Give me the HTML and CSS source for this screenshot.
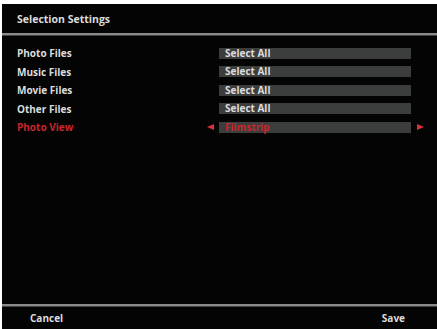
FILE: index.html
```html
<!DOCTYPE html>
<html>
<head>
<meta charset="utf-8">
<link rel="stylesheet" href="styles.css">
</head>
<body>
<div class="screen">
  <div class="header">Selection Settings</div>
  <div class="rule"></div>
  <div class="list">
    <div class="row"><span class="label">Photo Files</span><span class="arrow"></span><span class="value">Select All</span><span class="arrow"></span></div>
    <div class="row"><span class="label">Music Files</span><span class="arrow"></span><span class="value">Select All</span><span class="arrow"></span></div>
    <div class="row"><span class="label">Movie Files</span><span class="arrow"></span><span class="value">Select All</span><span class="arrow"></span></div>
    <div class="row"><span class="label">Other Files</span><span class="arrow"></span><span class="value">Select All</span><span class="arrow"></span></div>
    <div class="row active"><span class="label">Photo View</span><span class="arrow left"></span><span class="value">Filmstrip</span><span class="arrow right"></span></div>
  </div>
  <div class="rule"></div>
  <div class="footer"><span>Cancel</span><span>Save</span></div>
</div>
</body>
</html>
```

FILE: styles.css
```css
* {
  box-sizing: border-box;
}
html, body {
  margin: 0;
  padding: 0;
  background: #ffffff;
}
body {
  width: 437px;
  height: 329px;
  overflow: hidden;
  font-family: "Open Sans", "DejaVu Sans", sans-serif;
  font-weight: 700;
}
.screen {
  margin-top: 4px;
  margin-left: 2px;
  height: 325px;
  background: #040404;
  display: flex;
  flex-direction: column;
  color: #dcdcdc;
}
.header {
  height: 29px;
  line-height: 30px;
  padding-left: 15px;
  font-size: 10.5px;
}
.rule {
  height: 3px;
  background: #8a8a8a;
  border-bottom: 1px solid #444;
}
.list {
  flex: 1;
  padding-top: 8px;
}
.row {
  display: flex;
  align-items: center;
  height: 18.5px;
  font-size: 10px;
}
.label {
  width: 199px;
  padding-left: 15px;
}
.arrow {
  width: 18px;
  display: flex;
  justify-content: center;
}
.value {
  width: 192px;
  height: 11px;
  line-height: 11px;
  background: #3b3e3d;
  padding-left: 6px;
}
.active .label, .active .value {
  color: #c8262c;
}
.arrow.left::before {
  content: "";
  border-top: 3px solid transparent;
  border-bottom: 3px solid transparent;
  border-right: 7px solid #e0303a;
}
.arrow.right::before {
  content: "";
  border-top: 3px solid transparent;
  border-bottom: 3px solid transparent;
  border-left: 7px solid #e0303a;
}
.footer {
  height: 22px;
  display: flex;
  justify-content: space-between;
  align-items: center;
  padding: 0 32px 0 28px;
  font-size: 10px;
}
```
